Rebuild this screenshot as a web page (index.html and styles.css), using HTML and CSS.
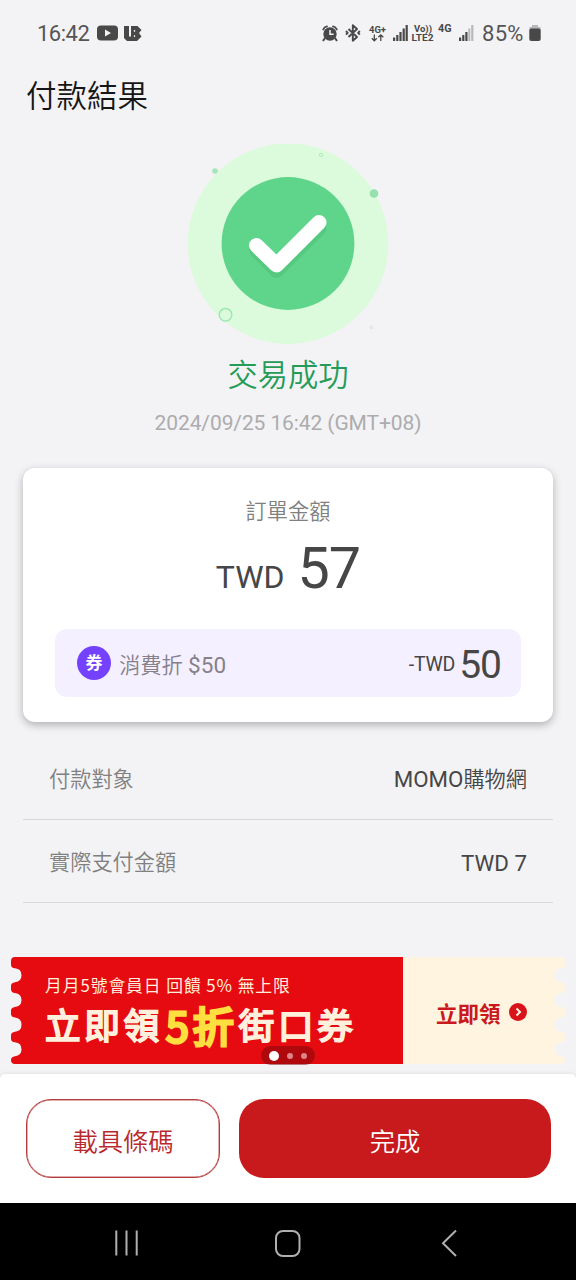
FILE: index.html
```html
<!DOCTYPE html>
<html lang="zh-Hant">
<head>
<meta charset="utf-8">
<title>付款結果</title>
<link rel="stylesheet" href="styles.css">
</head>
<body>
<div class="screen">
  <header class="status">
    <span class="clock">16:42</span>
    <svg class="status-left" width="48" height="20" viewBox="0 0 48 20">
      <rect x="0" y="2.500" width="21" height="15" rx="4" fill="#484848"/>
      <path d="M8 6.500 14 10 8 13.500z" fill="#f3f3f5"/>
      <path d="M27 3h5v10.500h2V3h6.500l4 4-2.500 3 2.500 3.500-4.500 4.500H30l-3-3z" fill="#484848"/>
      <path d="M33 2.500v7M37.500 7v1.800M37.500 12.300v1.800" stroke="#f3f3f5" stroke-width="1.200" fill="none"/>
    </svg>
    <svg class="status-right" width="155" height="24" viewBox="321 21 155 24">
      <g fill="#484848">
        <circle cx="330" cy="34" r="6.700"/>
        <path d="M325 38l-2 3M335 38l2 3" stroke="#484848" stroke-width="2"/>
        <path d="M323.200 29.500q1-2.700 3.800-3.200M336.800 29.500q-1-2.700-3.800-3.200" stroke="#484848" stroke-width="1.800" fill="none" stroke-linecap="round"/>
        <path d="M330 30v4.200h3.600" stroke="#f3f3f5" stroke-width="1.500" fill="none"/>
        <path d="M348.500 29l8.500 8-4.200 3.700V25.300l4.200 3.700-8.500 8M346 31l1.700 1.800-1.700 1.800M359.800 31l-1.700 1.800 1.700 1.800" stroke="#484848" stroke-width="1.900" fill="none" stroke-linejoin="round"/>
        <text class="net" x="369" y="32.500" font-size="9" textLength="17" lengthAdjust="spacingAndGlyphs">4G+</text>
        <path d="M374.300 34.500v6M371.800 38.300l2.500 2.500 2.500-2.500M380.800 41v-6M378.300 37.300l2.500-2.500 2.500 2.500" stroke="#484848" stroke-width="1.300" fill="none"/>
        <path d="M393 37.500h2.200v3.500H393zM396.200 35h2.200v6h-2.200zM399.400 32h2.200v9h-2.200zM402.600 28.500h2.200V41h-2.200zM405.600 25h2.200v16h-2.200z"/>
        <text class="net" x="414" y="32.300" font-size="9.500" textLength="18" lengthAdjust="spacingAndGlyphs">Vo))</text>
        <text class="net" x="411.500" y="41.300" font-size="9.800" textLength="22" lengthAdjust="spacingAndGlyphs">LTE2</text>
        <text class="net" x="438" y="32.300" font-size="10.500" textLength="13.500" lengthAdjust="spacingAndGlyphs">4G</text>
        <path d="M459 37.500h2.200v3.500H459zM462.200 35h2.200v6h-2.200zM465.300 32h2.200v9h-2.200z"/>
        <path d="M468.300 28.500h2V41h-2zM471.200 25h2.200v16h-2.200z" fill="#b8b8ba"/>
      </g>
    </svg>
    <span class="percent">85%</span>
    <svg class="battery" width="12" height="18" viewBox="0 0 12 18">
      <path d="M3 1h6v2h2.500v3H.5V3H3z" fill="#b8b8ba"/>
      <rect x=".3" y="4.500" width="11.400" height="12.500" rx="2" fill="#484848"/>
    </svg>
  </header>

  <h1 class="title">付款結果</h1>

  <section class="result">
    <svg class="badge" width="220" height="215" viewBox="180 135 220 215">
      <circle cx="288" cy="243.700" r="100.300" fill="#dcfadc"/>
      <circle cx="288" cy="243.500" r="66.400" fill="#5fd58b"/>
      <path d="M256.800 250.500 276.500 270.500 319 228.500" class="tick tick-shade"/>
      <path d="M256.500 245.500 276.500 265 319 222.500" class="tick"/>
      <circle cx="215" cy="171" r="2.800" fill="#a5e6b7"/>
      <circle cx="374" cy="193.500" r="4.300" fill="#94e0ae"/>
      <circle cx="225.500" cy="314.800" r="6.300" class="ring"/>
      <circle cx="321" cy="155" r="1.600" class="ring ring-thin"/>
      <circle cx="371.500" cy="327.300" r="1.300" class="ring ring-faint"/>
    </svg>
    <p class="state">交易成功</p>
    <p class="time">2024/09/25 16:42 (GMT+08)</p>
  </section>

  <section class="card">
    <p class="card-label">訂單金額</p>
    <p class="amount"><span class="currency">TWD</span><span class="value">57</span></p>
    <div class="coupon">
      <span class="coupon-icon">券</span>
      <span class="coupon-name">消費折 <span class="latin">$50</span></span>
      <span class="coupon-off">-TWD</span>
      <span class="coupon-value">50</span>
    </div>
  </section>

  <dl class="details">
    <div class="row"><dt>付款對象</dt><dd><span class="latin">MOMO</span>購物網</dd></div>
    <div class="row"><dt>實際支付金額</dt><dd><span class="latin">TWD 7</span></dd></div>
  </dl>

  <section class="banner">
    <svg class="ticket" width="554" height="107" viewBox="0 0 554 107">
      <path fill="#e60b10" d="M392 0H4Q0 0 0 4V7.500Q0 11.300 4 11.300Q10.500 12 10.500 18.300T4 25.300Q0 25.800 0 29V32.200Q0 35.500 4 36Q10.500 36.800 10.500 43T4 50Q0 50.500 0 53.500V57Q0 60 4 60.500Q10.500 61.300 10.500 67.700T4 74.700Q0 75.200 0 78.200V81.700Q0 84.800 4 85.300Q10.500 86 10.500 92.300T4 99.300Q0 99.800 0 103Q0 107 4 107H392Z"/>
      <path fill="#fef4e0" d="M392 0H550Q554 0 554 4V7.500Q554 11.300 550 11.300Q543.500 12 543.500 18.300T550 25.300Q554 25.800 554 29V32.200Q554 35.500 550 36Q543.500 36.800 543.500 43T550 50Q554 50.500 554 53.500V57Q554 60 550 60.500Q543.500 61.300 543.500 67.700T550 74.700Q554 75.200 554 78.200V81.700Q554 84.800 550 85.300Q543.500 86 543.500 92.300T550 99.300Q554 99.800 554 103Q554 107 550 107H392Z"/>
    </svg>
    <div class="promo">
      <p class="promo-sub">月月5號會員日 回饋 5% 無上限</p>
      <p class="promo-main">立即領<b class="five">5</b><b class="fold">折</b>街口券</p>
    </div>
    <div class="claim">
      <span>立即領</span>
      <svg width="18" height="18" viewBox="0 0 18 18">
        <circle cx="9" cy="9" r="9" fill="#d8141a"/>
        <path d="M7.500 5.500 11 9l-3.500 3.500" fill="none" stroke="#fef4e0" stroke-width="2"/>
      </svg>
    </div>
    <div class="dots"><i class="dot dot-on"></i><i class="dot"></i><i class="dot"></i></div>
  </section>

  <footer class="actions">
    <button class="btn btn-outline">載具條碼</button>
    <button class="btn btn-solid">完成</button>
  </footer>

  <nav class="nav">
    <svg width="28" height="28" viewBox="0 0 28 28"><path d="M3.300 1.500v25M13.500 1.500v25M23.700 1.500v25"/></svg>
    <svg width="28" height="28" viewBox="0 0 28 28"><rect x="1" y="2" width="23.500" height="25" rx="7"/></svg>
    <svg width="28" height="28" viewBox="0 0 28 28"><path d="M20 1.500 7 14.300l13 12.700"/></svg>
  </nav>
</div>
</body>
</html>
```
FILE: styles.css
```css
* { box-sizing: border-box; }

body, h1, p, dl, dd { margin: 0; }

body {
  background: #f3f3f5;
  color: #464646;
  font-family: Roboto, "Noto Sans CJK TC", sans-serif;
}

.screen {
  width: 576px;
  height: 1280px;
  display: flex;
  flex-direction: column;
  overflow: hidden;
}

.screen > * { flex: none; }

.latin { font-weight: 400; }

.status {
  height: 66px;
  padding: 0 35px 0 37px;
  display: flex;
  align-items: center;
  color: #555;
}

.clock { width: 60px; font-size: 22px; letter-spacing: -0.5px; }
.status-right { margin-left: auto; margin-right: 1px; }
.net { font-weight: 700; }
.percent { width: 47px; margin-left: 5px; font-size: 22px; letter-spacing: 0.3px; }

.title {
  height: 56px;
  padding-left: 26px;
  font: 350 30.500px/56px "Noto Sans CJK TC", sans-serif;
  color: #161616;
}

.result {
  height: 346px;
  padding-top: 13px;
  text-align: center;
}

.badge { display: block; margin-left: 180px; }

.tick {
  fill: none;
  stroke: #fff;
  stroke-width: 15px;
  stroke-linecap: round;
  stroke-linejoin: round;
}

.tick-shade { stroke: #56c981; }
.ring { fill: none; stroke: #9de8b0; stroke-width: 1.500px; }
.ring-thin { stroke-width: 0.800px; }
.ring-faint { stroke: #cbdcd1; stroke-width: 0.800px; }

.state {
  margin-top: 1px;
  font: 350 30.300px/44px "Noto Sans CJK TC", sans-serif;
  color: #259b58;
}

.time {
  margin-top: 12px;
  font-size: 21px;
  line-height: 32px;
  letter-spacing: -0.100px;
  color: #acacae;
}

.card {
  width: 530px;
  height: 254px;
  margin-left: 23px;
  padding: 29px 32px 0;
  border-radius: 12px;
  background: #fff;
  box-shadow: 0 3px 8px rgba(0, 0, 0, 0.28);
  text-align: center;
}

.card-label {
  font-size: 21.200px;
  line-height: 30px;
  font-weight: 350;
  color: #808080;
}

.amount {
  height: 84px;
  margin-bottom: 18px;
  display: flex;
  justify-content: center;
  align-items: baseline;
  gap: 13px;
  line-height: 84px;
}

.currency { font-size: 32px; }
.value { font-size: 57.500px; letter-spacing: -1px; }

.coupon {
  height: 68px;
  padding: 0 20px 0 22px;
  display: flex;
  align-items: center;
  border-radius: 12px;
  background: #f5f0ff;
}

.coupon-icon {
  width: 34px;
  height: 34px;
  border-radius: 50%;
  background: #7442ff;
  color: #fff;
  font-size: 17px;
  line-height: 34px;
  font-weight: 700;
}

.coupon-name {
  margin-left: 8px;
  padding-top: 4px;
  font-size: 21.300px;
  line-height: 30px;
  color: #858089;
  font-weight: 350;
}

.coupon-name .latin { font-size: 22.500px; }

.coupon-off { margin-left: auto; padding-top: 2px; font-size: 19.500px; letter-spacing: -0.200px; }
.coupon-value { margin-left: 4px; padding-top: 4px; font-size: 39px; line-height: 64px; letter-spacing: -1px; }

.details {
  height: 235px;
  padding: 16px 23px 0;
}

.row {
  height: 82px;
  padding: 2px 26px 0;
  display: flex;
  justify-content: space-between;
  align-items: center;
  border-bottom: 1px solid #d8d8dc;
  font-size: 21.200px;
  line-height: 30px;
  font-weight: 350;
}

.row + .row { height: 83px; padding-top: 4px; }
.row dt { color: #808080; }
.row .latin { font-size: 22.300px; }

.banner {
  position: relative;
  width: 554px;
  height: 107px;
  margin-left: 11px;
  display: flex;
}

.ticket { position: absolute; inset: 0; }

.promo {
  position: relative;
  width: 392px;
  padding: 15px 0 0 34px;
  color: #fff0dd;
  font-family: "Noto Sans CJK TC", sans-serif;
  white-space: nowrap;
}

.promo-sub { font-size: 16.800px; line-height: 26px; letter-spacing: 0.930px; }

.promo-main {
  height: 52px;
  display: flex;
  align-items: center;
  font-size: 35.500px;
  line-height: 52px;
  font-weight: 400;
  letter-spacing: 3.800px;
  -webkit-text-stroke: 2px currentColor;
  stroke-linejoin: round;
}

.five, .fold { font-size: 41px; font-weight: 400; color: #ffdf40; letter-spacing: 0; -webkit-text-stroke-width: 3.200px; }
.five { margin-left: 3px; }
.fold { margin: 0 5px 0 4px; }

.claim {
  position: relative;
  flex: 1;
  padding: 3px 0 0 33px;
  display: flex;
  align-items: center;
  gap: 8px;
  color: #c9191d;
  font-size: 21.500px;
  font-weight: 700;
}

.dots {
  position: absolute;
  left: 250px;
  top: 89px;
  width: 54px;
  height: 19px;
  display: flex;
  align-items: center;
  justify-content: center;
  gap: 8px;
  border-radius: 10px;
  background: rgba(120, 8, 12, 0.5);
}

.dot { width: 6px; height: 6px; border-radius: 50%; background: #dd8589; }
.dot-on { width: 10px; height: 10px; background: #fff; }

.actions {
  height: 129px;
  margin-top: 10px;
  padding: 25px 25px 0 26px;
  display: flex;
  gap: 19px;
  border-radius: 5px 5px 0 0;
  background: #fff;
  box-shadow: 0 0 4px rgba(0, 0, 0, 0.1);
}

.btn {
  height: 79px;
  padding: 2px 0 0;
  border: 0;
  border-radius: 25px;
  font: 350 25.300px "Noto Sans CJK TC", sans-serif;
}

.btn-outline { width: 194px; border: 1px solid #b53c3c; background: #fff; color: #b8292d; box-shadow: inset 0 0 0 0.500px #c65a5a; }
.btn-solid { flex: 1; background: #c8191c; color: #fff; }

.nav {
  position: relative;
  height: 77px;
  padding: 3px 112px 0 113px;
  display: flex;
  justify-content: space-between;
  align-items: center;
  background: #000;
  fill: none;
  stroke: #b0b0b0;
  stroke-width: 2px;
}
```
